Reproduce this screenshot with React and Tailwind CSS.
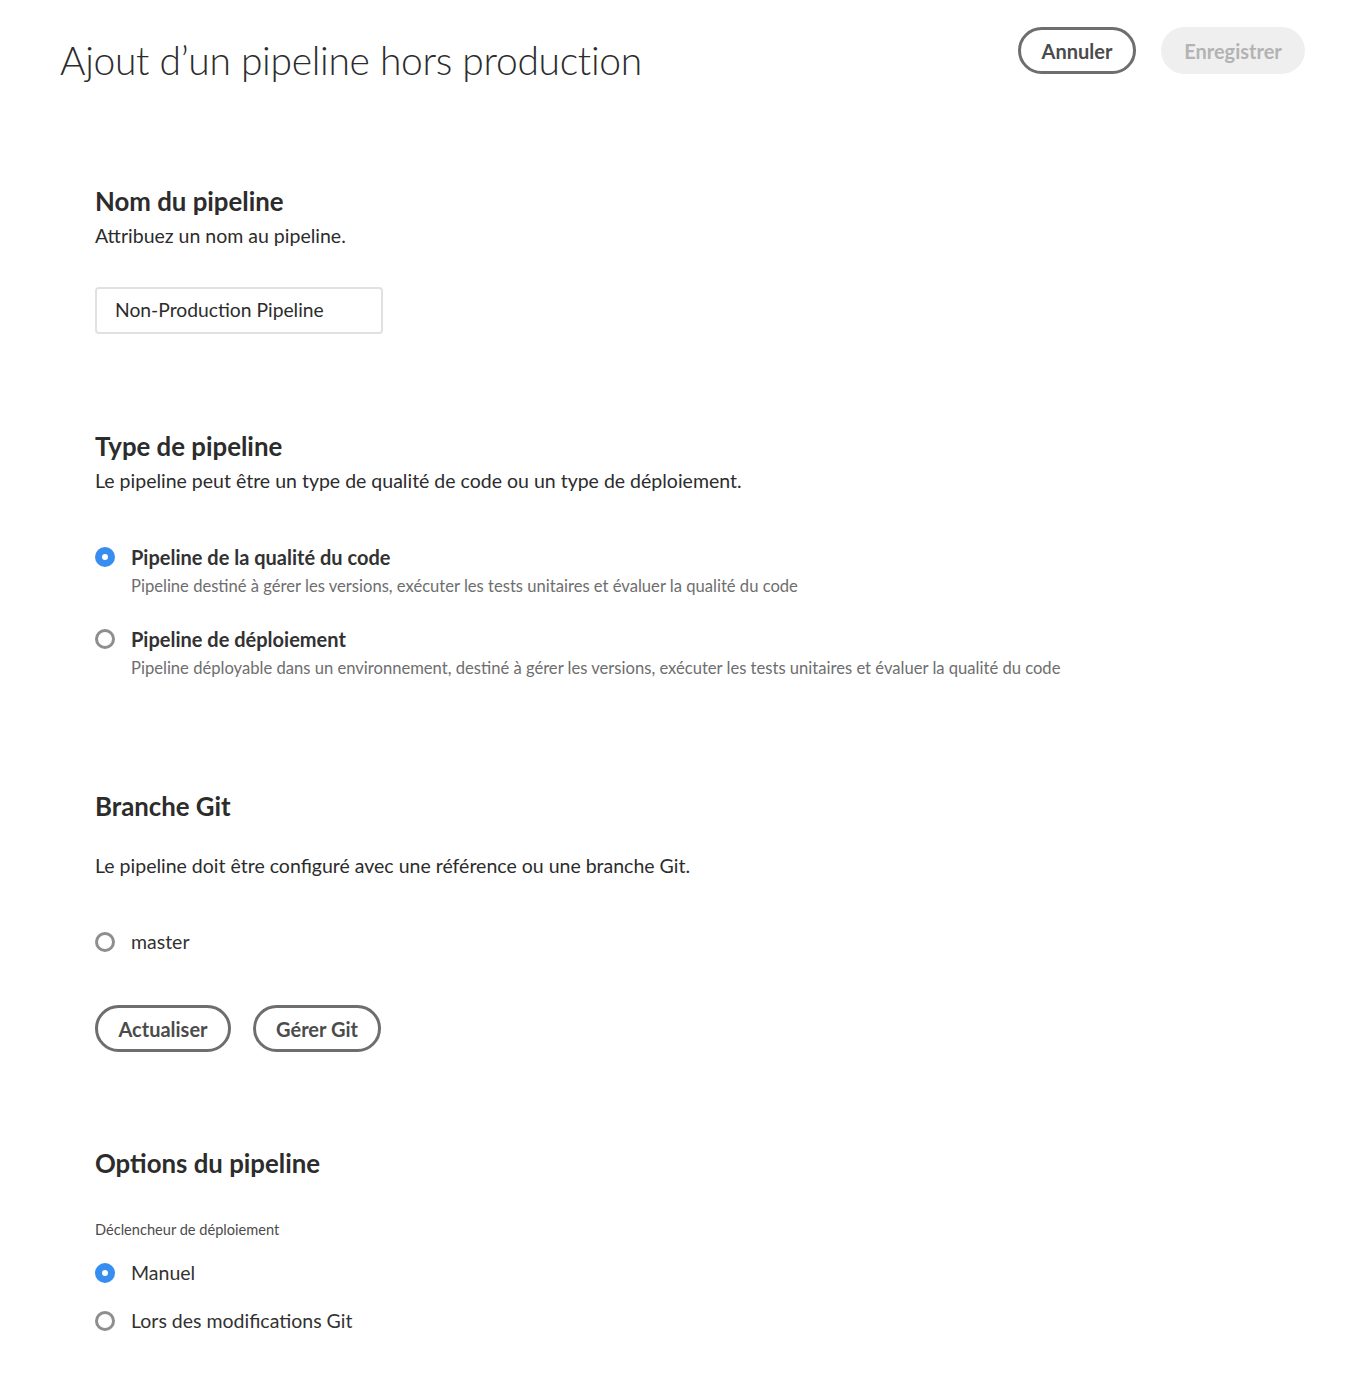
import React from "react";

function Radio({ checked }) {
  return checked ? (
    <span className="flex h-[20px] w-[20px] shrink-0 items-center justify-center rounded-full bg-[#378ef0]">
      <span className="h-[6px] w-[6px] rounded-full bg-white" />
    </span>
  ) : (
    <span className="block h-[20px] w-[20px] shrink-0 rounded-full border-[3px] border-[#8e8e8e] bg-white" />
  );
}

function OutlineButton({ children, className = "" }) {
  return (
    <button
      className={`h-[47px] rounded-full border-[3px] border-[#6e6e6e] bg-white text-[20px] font-bold text-[#4b4b4b] ${className}`}
    >
      {children}
    </button>
  );
}

export default function App() {
  return (
    <div className="min-h-[1388px] bg-white font-['Lato',sans-serif] text-[#2c2c2c]">
      {/* Header */}
      <div className="flex items-start justify-between pl-[60px] pr-[53px] pt-[27px]">
        <h1 className="mt-[7px] text-[39px] font-light leading-[52px] tracking-[-0.3px] text-[#2c2c2c]">
          Ajout d’un pipeline hors production
        </h1>
        <div className="flex gap-[25px]">
          <OutlineButton className="w-[118px]">Annuler</OutlineButton>
          <button className="h-[47px] w-[144px] rounded-full bg-[#efefef] text-[20px] font-bold text-[#b3b3b3]">
            Enregistrer
          </button>
        </div>
      </div>

      <div className="pl-[95px]">
        {/* Nom du pipeline */}
        <section className="mt-[100px]">
          <h2 className="text-[25.8px] font-bold leading-[30px]">Nom du pipeline</h2>
          <p className="mt-[7px] text-[19.5px] leading-[26px]">Attribuez un nom au pipeline.</p>
          <div className="mt-[38px] flex h-[47px] w-[288px] items-center rounded-[4px] border-2 border-[#e1e1e1] px-[18px] text-[19.3px]">
            Non-Production Pipeline
          </div>
        </section>

        {/* Type de pipeline */}
        <section className="mt-[97px]">
          <h2 className="text-[25.8px] font-bold leading-[30px]">Type de pipeline</h2>
          <p className="mt-[7px] text-[19.5px] leading-[26px]">
            Le pipeline peut être un type de qualité de code ou un type de déploiement.
          </p>

          <div className="mt-[51px] flex gap-[16px]">
            <div className="mt-[2px] shrink-0">
              <Radio checked />
            </div>
            <div>
              <div className="text-[20px] font-bold leading-[24px] text-[#323232]">
                Pipeline de la qualité du code
              </div>
              <div className="mt-[7px] text-[16.6px] leading-[20px] text-[#6e6e6e]">
                Pipeline destiné à gérer les versions, exécuter les tests unitaires et évaluer la qualité du code
              </div>
            </div>
          </div>

          <div className="mt-[31px] flex gap-[16px]">
            <div className="mt-[2px] shrink-0">
              <Radio />
            </div>
            <div>
              <div className="text-[20px] font-bold leading-[24px] text-[#323232]">
                Pipeline de déploiement
              </div>
              <div className="mt-[7px] text-[16.6px] leading-[20px] text-[#6e6e6e]">
                Pipeline déployable dans un environnement, destiné à gérer les versions, exécuter les tests unitaires et évaluer la qualité du code
              </div>
            </div>
          </div>
        </section>

        {/* Branche Git */}
        <section className="mt-[113px]">
          <h2 className="text-[25.8px] font-bold leading-[30px]">Branche Git</h2>
          <p className="mt-[32px] text-[19.5px] leading-[26px]">
            Le pipeline doit être configuré avec une référence ou une branche Git.
          </p>
          <div className="mt-[51px] flex items-center gap-[16px]">
            <Radio />
            <span className="text-[19.5px] leading-[24px] text-[#323232]">master</span>
          </div>
          <div className="mt-[51px] flex gap-[22px]">
            <OutlineButton className="w-[136px]">Actualiser</OutlineButton>
            <OutlineButton className="w-[128px]">Gérer Git</OutlineButton>
          </div>
        </section>

        {/* Options du pipeline */}
        <section className="mt-[96px] pb-[50px]">
          <h2 className="text-[25.8px] font-bold leading-[30px]">Options du pipeline</h2>
          <div className="mt-[43px] text-[14.6px] leading-[18px] text-[#4b4b4b]">
            Déclencheur de déploiement
          </div>
          <div className="mt-[22px] flex items-center gap-[16px]">
            <Radio checked />
            <span className="text-[19.5px] leading-[24px] text-[#323232]">Manuel</span>
          </div>
          <div className="mt-[24px] flex items-center gap-[16px]">
            <Radio />
            <span className="text-[19.5px] leading-[24px] text-[#323232]">Lors des modifications Git</span>
          </div>
        </section>
      </div>
    </div>
  );
}
